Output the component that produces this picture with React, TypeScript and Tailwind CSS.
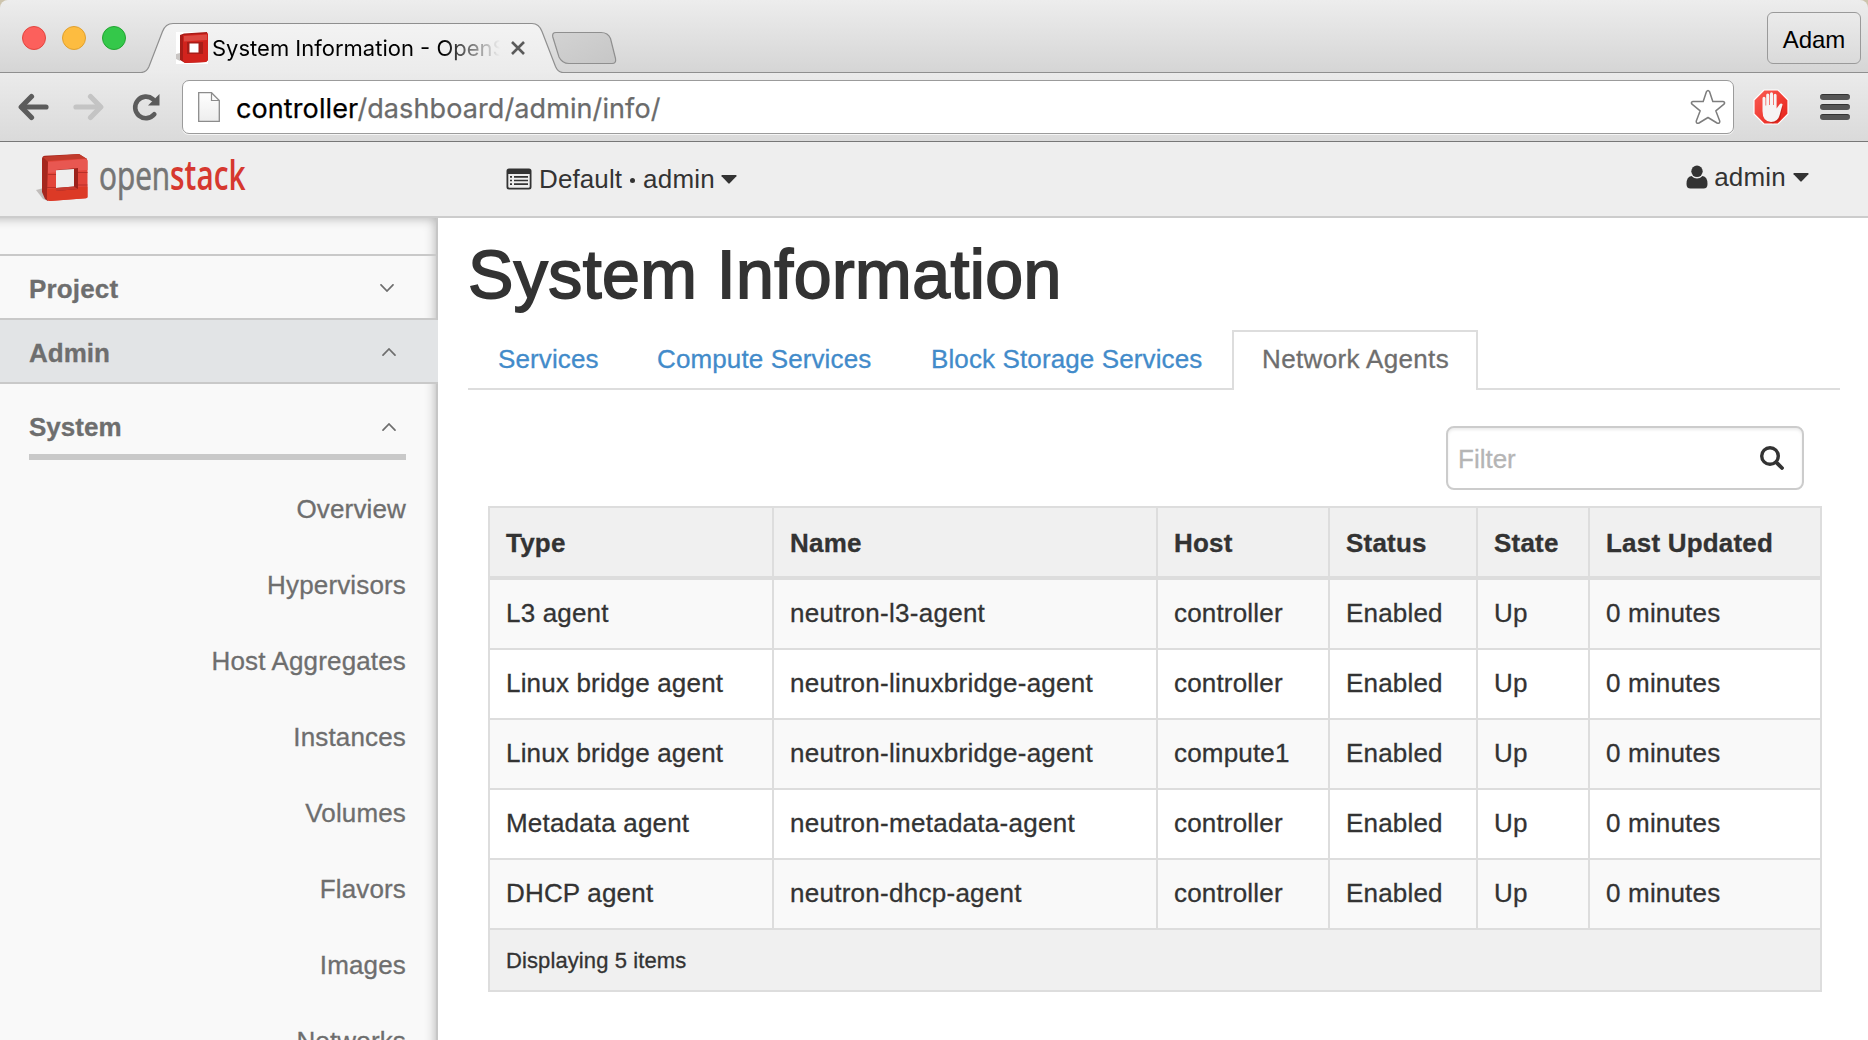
import React from 'react';

const agents = [
  ['L3 agent', 'neutron-l3-agent', 'controller', 'Enabled', 'Up', '0 minutes'],
  ['Linux bridge agent', 'neutron-linuxbridge-agent', 'controller', 'Enabled', 'Up', '0 minutes'],
  ['Linux bridge agent', 'neutron-linuxbridge-agent', 'compute1', 'Enabled', 'Up', '0 minutes'],
  ['Metadata agent', 'neutron-metadata-agent', 'controller', 'Enabled', 'Up', '0 minutes'],
  ['DHCP agent', 'neutron-dhcp-agent', 'controller', 'Enabled', 'Up', '0 minutes'],
];

const columns = ['Type', 'Name', 'Host', 'Status', 'State', 'Last Updated'];

const systemPanels = [
  'Overview',
  'Hypervisors',
  'Host Aggregates',
  'Instances',
  'Volumes',
  'Flavors',
  'Images',
  'Networks',
];

function Cube({ className }: { className: string }) {
  return (
    <svg viewBox="0 0 52 48" preserveAspectRatio="none" className={className}>
      <path d="M0 36 L8 34 L12 47 L7 45Z" fill="#b5b0ae" opacity=".8" />
      <path d="M6 5 Q6 2 9 1.800 L43 0 L51 5 L51 10 L12 9 L12 47 L9 45 L6 38Z" fill="#a5271e" />
      <path d="M7 3 L43 0 L51 5 L12 8Z" fill="#c13a2c" />
      <path d="M12 7 L49 4.500 Q51.500 4.500 51.500 7 V43 Q51.500 44 50 44.300 L14 47 Q11 47 11 44Z" fill="#e2453a" />
      <path d="M12 8 L49 5 Q51.500 5 51.500 8 V16 L12 19Z" fill="#e85751" />
      <path d="M11 35 L51.500 32.500 V43 Q51.500 44 50 44.300 L14 47 Q11 47 11 44Z" fill="#dc3a26" />
      <path d="M20 16 L42 14 V35 L20 37Z" fill="#9c221b" />
      <path d="M20 16.300 L38 15 V32.500 L20 34Z" fill="#eeeeee" />
      <path d="M20 34 L38 32.500 L42 35 L20 37Z" fill="#c63a2f" />
      <path d="M11 20.500 H20 M42 18.500 H51.500 M11 33.500 H20 M42 31 H51.500" stroke="#b83028" strokeWidth="1" />
    </svg>
  );
}

function FavIcon() {
  return (
    <svg viewBox="0 0 32 32" className="size-8">
      <rect width="32" height="32" fill="#fff" />
      <path d="M0 22L4 21V29L0 27Z" fill="#c9c5c3" />
      <path d="M4 3L8 1.500L31 0L32 3V28L30 30L9 31L4 28Z" fill="#a81d18" />
      <path d="M7 3L32 1.500V28L30 30L9 31L7 29Z" fill="#d2231d" />
      <path d="M8 4L31 2.500V8L8 9.500Z" fill="#dc4a42" />
      <path d="M11 10H27V22H11Z" fill="#a81d18" />
      <path d="M13.500 11.500H22.500V20.500H13.500Z" fill="#fff" />
    </svg>
  );
}

function Caret() {
  return (
    <svg viewBox="0 0 16 9" className="h-[9px] w-4 shrink-0">
      <path d="M1 0H15Q16 .3 15.400 1.200L8.700 8.300Q8 9 7.300 8.300L.6 1.200Q0 .3 1 0Z" fill="#333" />
    </svg>
  );
}

function Chevron({ up }: { up?: boolean }) {
  return (
    <svg viewBox="0 0 14 8" className="mt-px h-2 w-[14px]" fill="none" stroke="#6e6e6e" strokeWidth="1.700" strokeLinecap="round">
      <path d={up ? 'M1 7.200L7 1L13 7.200' : 'M1 .8L7 7L13 .8'} />
    </svg>
  );
}

function TabStrip() {
  return (
    <div className="relative h-[73px] overflow-hidden rounded-t-[8px] bg-linear-to-b from-[#ededed] to-[#d5d5d5] font-[Inter,sans-serif]">
      <svg viewBox="0 0 1868 73" className="absolute inset-0 h-[73px] w-[1868px]">
        <defs>
          <linearGradient id="tab" x1="0" y1="0" x2="0" y2="1">
            <stop offset="0" stopColor="#f3f3f3" />
            <stop offset="1" stopColor="#ebebeb" />
          </linearGradient>
          <linearGradient id="newtab" x1="0" y1="0" x2="1" y2="1">
            <stop offset="0" stopColor="#d3d3d3" />
            <stop offset="1" stopColor="#c6c6c6" />
          </linearGradient>
        </defs>
        <path
          d="M-2 72.500H141Q146.500 72.500 149 66.500L162.500 31.500Q165.500 23.500 173 23.500H532Q539 23.500 542 31.500L555.500 66.500Q558 72.500 563 72.500H1870V76H-2Z"
          fill="url(#tab)"
          stroke="#8f8f8f"
          strokeWidth="1.200"
        />
        <path
          d="M556 32.500H601Q608 32.500 610.500 38.500L615.500 58.500Q616.500 63.500 612 63.500H569Q562 63.500 559 57L552.800 37Q551.800 32.500 556 32.500Z"
          fill="url(#newtab)"
          stroke="#8f8f8f"
          strokeWidth="1.200"
        />
      </svg>
      <div className="relative flex h-full">
        <div className="mt-[26px] ml-[22px] flex h-6 gap-4">
          <span className="size-6 rounded-full border border-[#e2463f] bg-[#fc605c]" />
          <span className="size-6 rounded-full border border-[#e0a02f] bg-[#fdbc40]" />
          <span className="size-6 rounded-full border border-[#23a532] bg-[#34c84a]" />
        </div>
        <div className="mt-8 ml-[50px] flex h-8 items-center">
          <FavIcon />
          <span className="ml-[4px] w-[288px] overflow-hidden bg-linear-to-r from-black from-80% to-transparent bg-clip-text text-[22px] leading-8 whitespace-nowrap text-transparent">
            System Information - OpenStack
          </span>
          <svg viewBox="0 0 14 14" className="ml-[11px] size-[14px]" stroke="#5a5a5a" strokeWidth="2.600">
            <path d="M1 1L13 13M13 1L1 13" />
          </svg>
        </div>
        <div className="mt-3 mr-[7px] ml-auto flex h-[52px] w-[94px] items-center justify-center rounded-[6px] border border-[#9a9a9a] bg-linear-to-b from-[#ebebeb] to-[#dadada] font-['Liberation_Sans',sans-serif] text-2xl text-black">
          <span className="pt-[4px]">Adam</span>
        </div>
      </div>
    </div>
  );
}

function Toolbar() {
  return (
    <div className="flex h-[69px] items-center border-b border-[#777] bg-linear-to-b from-[#ebebeb] to-[#dadada]">
      <svg viewBox="0 0 32 28" className="ml-[17px] h-7 w-8" fill="none" stroke="#5c5c5c" strokeWidth="5.200" strokeLinecap="round" strokeLinejoin="round">
        <path d="M29 14H5" />
        <path d="M14.500 3.500L4.200 14L14.500 24.500" />
      </svg>
      <svg viewBox="0 0 32 28" className="ml-6 h-7 w-8" fill="none" stroke="#c4c4c4" strokeWidth="5.200" strokeLinecap="round" strokeLinejoin="round">
        <path d="M3 14H27" />
        <path d="M17.500 3.500L27.800 14L17.500 24.500" />
      </svg>
      <svg viewBox="0 0 28 28" className="ml-[27px] size-7">
        <path d="M22.300 21.300A10.800 10.800 0 1 1 21 6.200" fill="none" stroke="#5c5c5c" strokeWidth="4.600" strokeLinecap="round" />
        <path d="M27.500 1V12.500H16Z" fill="#5c5c5c" />
      </svg>
      <div className="ml-[22px] flex h-[54px] w-[1552px] items-center rounded-[7px] border border-[#9b9b9b] bg-white pr-[7px] pl-[15px] shadow-[0_1px_0_#f5f5f5]">
        <svg viewBox="0 0 22 30" className="h-[30px] w-[22px]">
          <defs>
            <linearGradient id="doc" x1="0" y1="0" x2="0" y2="1">
              <stop offset="0" stopColor="#fff" />
              <stop offset="1" stopColor="#ededed" />
            </linearGradient>
          </defs>
          <path d="M.7 .7H13.500L21.300 8.500V29.300H.7Z" fill="url(#doc)" stroke="#8c8c8c" strokeWidth="1.300" />
          <path d="M13.500 .7V8.500H21.300" fill="none" stroke="#8c8c8c" strokeWidth="1.200" />
        </svg>
        <p className="mt-[3px] ml-4 font-[Inter,sans-serif] text-[27px] leading-8 tracking-[.1px] text-[#6b6b6b] [-webkit-text-stroke:.25px]">
          <span className="text-black">controller</span>/dashboard/admin/info/
        </p>
        <svg viewBox="0 0 36 36" className="ml-auto size-9" fill="none" stroke="#7d7d7d" strokeWidth="1.500" strokeLinejoin="round">
          <path d="M16.500 2.600Q18 .2 19.500 2.600L22.800 12.600H33Q35.600 13.200 34 15.200L25.800 21.800L29.800 32.200Q29.800 35.200 27 34L18 28.500L9 34Q6.200 35.200 6.200 32.200L10.200 21.800L2 15.200Q.4 13.200 3 12.600H13.200Z" />
        </svg>
      </div>
      <svg viewBox="0 0 36 36" className="ml-[19px] size-9">
        <defs>
          <linearGradient id="stop" x1="0" y1="0" x2="1" y2="1">
            <stop offset="0" stopColor="#fb5d55" />
            <stop offset="1" stopColor="#e62017" />
          </linearGradient>
        </defs>
        <path d="M11 1H25L35 11V25L25 35H11L1 25V11Z" fill="url(#stop)" stroke="#fff" strokeWidth="1.200" />
        <path d="M12 31L20 34.500L27 31L30 17L27 21Z" fill="#b5150e" opacity=".55" />
        <path
          d="M9.500 22V9.300Q9.500 7.700 11 7.700Q12.500 7.700 12.500 9.300V16.500H13.200V6Q13.200 4.500 14.700 4.500Q16.300 4.500 16.300 6V16H17V4.800Q17 3.300 18.500 3.300Q20 3.300 20 4.800V16H20.700V6.300Q20.700 4.800 22.200 4.800Q23.600 4.800 23.600 6.300V19.500L26.500 15.400Q28 13.800 29.600 15.200L26.800 25.500Q25 33 18 33Q9.500 32.500 9.500 22Z"
          fill="#f6f4f4"
        />
      </svg>
      <div className="ml-[31px] flex w-[30px] flex-col gap-1">
        <span className="h-[6px] rounded-full border-t border-[#333] bg-[#555]" />
        <span className="h-[6px] rounded-full border-t border-[#333] bg-[#555]" />
        <span className="h-[6px] rounded-full border-t border-[#333] bg-[#555]" />
      </div>
    </div>
  );
}

function Header() {
  return (
    <header className="flex h-[76px] shrink-0 items-start border-b-2 border-[#ccc] bg-[#eee]">
      <Cube className="mt-3 ml-9 h-12 w-[52px]" />
      <svg viewBox="0 0 148 60" className="mt-[3px] ml-[11px] h-[60px] w-[148px] overflow-visible">
        <text x="0" y="44.500" fontFamily="Open Sans, sans-serif" fontSize="41" textLength="146.500" lengthAdjust="spacingAndGlyphs" fill="#757575">
          <tspan stroke="#757575" strokeWidth=".7">open</tspan>
          <tspan fontWeight="600" fill="#d6382f">stack</tspan>
        </text>
      </svg>
      <div className="mt-[22px] ml-[259px] flex h-[30px] items-center">
        <svg viewBox="0 0 26 22" className="h-[22px] w-[26px]">
          <path d="M3 .5H23Q25.500 .5 25.500 3V19Q25.500 21.500 23 21.500H3Q.5 21.500 .5 19V3Q.5 .5 3 .5ZM2.300 6V18.500Q2.300 19.700 3.500 19.700H22.500Q23.700 19.700 23.700 18.500V6Z" fill="#333" fillRule="evenodd" />
          <path d="M4 8.800H6M4 12.500H6M4 16.200H6M8 8.800H22M8 12.500H22M8 16.200H22" stroke="#333" strokeWidth="1.700" />
        </svg>
        <span className="ml-[7px] tracking-[.1px]">Default</span>
        <span className="mx-[8px] mt-[2px] size-[5px] rounded-full bg-[#333]" />
        <span className="mr-[6px] tracking-[.2px]">admin</span>
        <Caret />
      </div>
      <div className="mt-5 mr-[59px] ml-auto flex h-[30px] items-center">
        <svg viewBox="0 0 22 24" className="h-6 w-[22px]" fill="#333">
          <ellipse cx="11" cy="6.300" rx="5.700" ry="5.800" />
          <path d="M5.500 11Q8 13.600 11 13.600Q14 13.600 16.500 11Q21.500 11.500 21.500 19Q21.500 23.500 17.500 23.500H4.500Q.5 23.500 .5 19Q.5 11.500 5.500 11Z" />
        </svg>
        <span className="mr-[7px] ml-[6px] tracking-[.2px]">admin</span>
        <Caret />
      </div>
    </header>
  );
}

function Sidebar() {
  return (
    <aside className="w-[438px] shrink-0 border-r-2 border-[#c6c6c6] bg-[#f9f9f9] font-bold text-[#6e6e6e] shadow-[inset_-9px_9px_12px_-9px_rgba(0,0,0,.3)]">
      <div className="h-9" />
      <div className="flex h-[66px] items-center justify-between border-y-2 border-[#c9c9c9] pr-[42px] pl-[29px]">
        <span className="pt-[4px] tracking-[.15px]">Project</span>
        <Chevron />
      </div>
      <div className="-mr-[2px] flex h-16 items-center justify-between border-b-2 border-[#c9c9c9] bg-[#e2e4e6] pr-[42px] pl-[29px]">
        <span className="pt-[4px]">Admin</span>
        <Chevron up />
      </div>
      <div className="mr-[30px] ml-[29px] flex h-[76px] items-end justify-between border-b-[6px] border-[#c9c9c9] pr-[10px] pb-[12px]">
        <span className="leading-[30px]">System</span>
        <span className="mb-[11px] flex">
          <Chevron up />
        </span>
      </div>
      <ul className="pt-[11px] pr-[30px] text-right font-normal tracking-[.15px]">
        {systemPanels.map((p) => (
          <li key={p} className="flex h-[76px] items-center justify-end">
            {p}
          </li>
        ))}
      </ul>
    </aside>
  );
}

function Tabs() {
  const link = 'border-b-2 border-[#ddd] px-[30px] text-[#428bca]';
  return (
    <nav className="flex h-[60px] leading-[58px] tracking-[.12px] whitespace-nowrap">
      <a className={`${link} w-[159px]`}>Services</a>
      <a className={`${link} w-[274px]`}>Compute Services</a>
      <a className={`${link} w-[331px]`}>Block Storage Services</a>
      <a className="w-[246px] border-2 border-b-0 border-[#ddd] px-[28px] leading-[54px] tracking-[.35px] text-[#6e6e6e]">Network Agents</a>
      <span className="flex-1 border-b-2 border-[#ddd]" />
    </nav>
  );
}

function AgentsTable() {
  return (
    <table className="ml-5 w-[1334px] table-fixed border-separate border-spacing-0 border-t-2 border-l-2 border-[#ddd] text-left">
      <colgroup>
        <col className="w-[284px]" />
        <col className="w-[384px]" />
        <col className="w-[172px]" />
        <col className="w-[148px]" />
        <col className="w-[112px]" />
        <col className="w-[232px]" />
      </colgroup>
      <thead>
        <tr className="h-[72px] bg-[#f0f0f0]">
          {columns.map((c) => (
            <th key={c} className="border-r-2 border-b-4 border-[#ddd] px-4 pt-[2px] pb-0 font-bold tracking-[.2px]">
              {c}
            </th>
          ))}
        </tr>
      </thead>
      <tbody>
        {agents.map((row, i) => (
          <tr key={i} className="h-[70px] odd:bg-[#f9f9f9]">
            {row.map((cell, j) => (
              <td key={j} className="border-r-2 border-b-2 border-[#ddd] px-4 pt-0 pb-[2px] tracking-[.18px] whitespace-nowrap nth-2:tracking-[.27px]">
                {cell}
              </td>
            ))}
          </tr>
        ))}
      </tbody>
      <tfoot>
        <tr className="h-[62px] bg-[#f0f0f0]">
          <td colSpan={6} className="border-r-2 border-b-2 border-[#ddd] px-4 pt-[2px] pb-0 text-[22px] tracking-[.1px]">
            Displaying 5 items
          </td>
        </tr>
      </tfoot>
    </table>
  );
}

export default function App() {
  return (
    <div className="flex h-[1040px] w-[1868px] flex-col overflow-hidden bg-[#cdc4ad] font-['Liberation_Sans',Arial,sans-serif] text-[26px] leading-[30px] text-[#333]">
      <TabStrip />
      <Toolbar />
      <Header />
      <div className="flex min-h-0 flex-1 bg-white [-webkit-text-stroke:.3px]">
        <Sidebar />
        <main className="flex-1 pr-7 pl-[30px]">
          <h1 className="mt-[16px] h-[80px] text-[68px] leading-[80px] tracking-[.45px] [-webkit-text-stroke:1.8px_#333]">
            System Information
          </h1>
          <div className="mt-[16px]">
            <Tabs />
          </div>
          <div className="mt-9 mr-9 mb-4 ml-auto flex h-16 w-[358px] items-center justify-between rounded-[8px] border-2 border-[#ccc] pr-[18px] pl-[10px] shadow-[inset_0_2px_3px_rgba(0,0,0,.08)]">
            <span className="pt-px text-[#b5b5b5]">Filter</span>
            <svg viewBox="0 0 24 24" className="size-6" fill="none" stroke="#333" strokeLinecap="round">
              <circle cx="10" cy="10" r="8.300" strokeWidth="3.400" />
              <path d="M16.300 16.300L22 22" strokeWidth="3.800" />
            </svg>
          </div>
          <AgentsTable />
        </main>
      </div>
    </div>
  );
}
